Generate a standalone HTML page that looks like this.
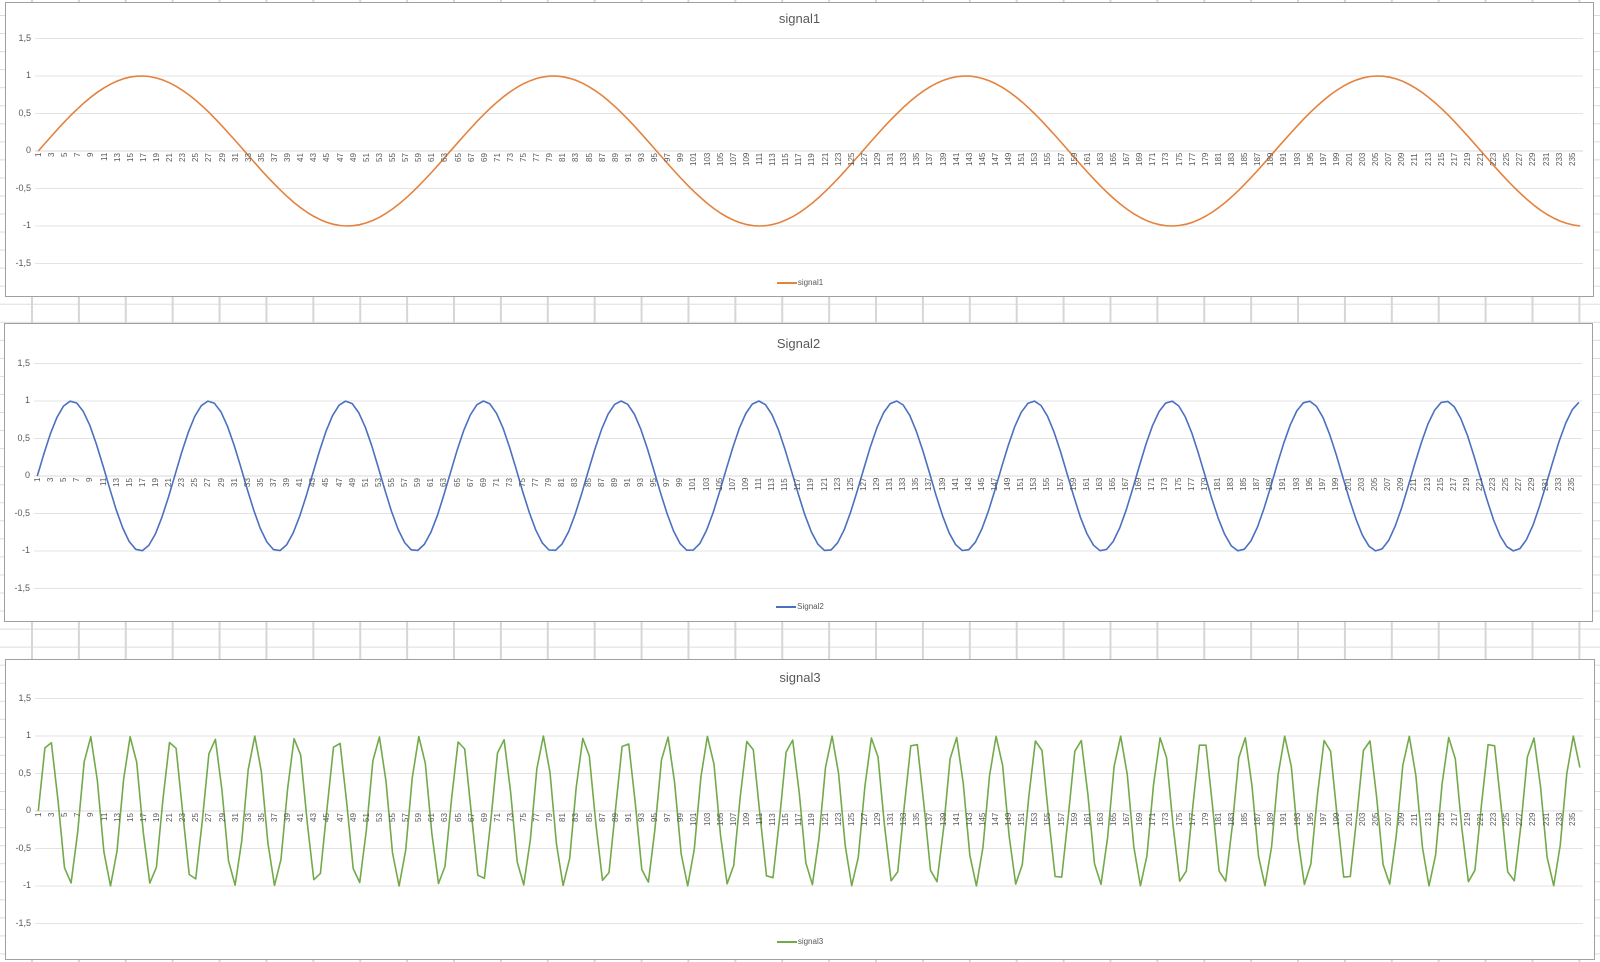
<!DOCTYPE html>
<html><head><meta charset="utf-8"><style>
html,body{margin:0;padding:0;}
body{width:1600px;height:962px;position:relative;overflow:hidden;background-color:#fff;
background-image:linear-gradient(to right,#d6d6d6 0,#d6d6d6 2px,transparent 2px),linear-gradient(to bottom,#dcdcdc 0,#dcdcdc 1px,transparent 1px);
background-size:46.9px 100%,100% 18.05px;background-position:31px 0,0 15px;font-family:"Liberation Sans",sans-serif;}
.chart{position:absolute;background:#fff;border:1px solid #a0a0a0;box-sizing:border-box;}
.title{position:absolute;left:0;right:0;text-align:center;font-size:13px;color:#595959;}
.yl{position:absolute;left:0;width:25px;text-align:right;font-size:9px;color:#595959;}
.lab{position:absolute;display:flex;left:26px;}
.lab span{display:block;width:13.12px;height:20px;writing-mode:vertical-rl;transform:rotate(180deg);text-align:end;font-size:8px;line-height:13.12px;color:#595959;}
.leg{position:absolute;left:0;right:0;text-align:center;font-size:8px;color:#595959;}
.leg i{display:inline-block;width:20px;height:2px;vertical-align:middle;margin-right:1px;}
svg{position:absolute;left:0;top:0;}
</style></head><body>

<div class="chart" id="c1" style="left:5px;top:2px;width:1589px;height:295px;">
<div class="title" style="top:8px;">signal1</div>
</div>
<div class="chart" id="c2" style="left:4px;top:323px;width:1589px;height:299px;">
<div class="title" style="top:12px;">Signal2</div>
</div>
<div class="chart" id="c3" style="left:5px;top:659px;width:1590px;height:301px;">
<div class="title" style="top:10px;">signal3</div>
</div>

<div id="labtpl" style="display:none"><span>1</span><span>3</span><span>5</span><span>7</span><span>9</span><span>11</span><span>13</span><span>15</span><span>17</span><span>19</span><span>21</span><span>23</span><span>25</span><span>27</span><span>29</span><span>31</span><span>33</span><span>35</span><span>37</span><span>39</span><span>41</span><span>43</span><span>45</span><span>47</span><span>49</span><span>51</span><span>53</span><span>55</span><span>57</span><span>59</span><span>61</span><span>63</span><span>65</span><span>67</span><span>69</span><span>71</span><span>73</span><span>75</span><span>77</span><span>79</span><span>81</span><span>83</span><span>85</span><span>87</span><span>89</span><span>91</span><span>93</span><span>95</span><span>97</span><span>99</span><span>101</span><span>103</span><span>105</span><span>107</span><span>109</span><span>111</span><span>113</span><span>115</span><span>117</span><span>119</span><span>121</span><span>123</span><span>125</span><span>127</span><span>129</span><span>131</span><span>133</span><span>135</span><span>137</span><span>139</span><span>141</span><span>143</span><span>145</span><span>147</span><span>149</span><span>151</span><span>153</span><span>155</span><span>157</span><span>159</span><span>161</span><span>163</span><span>165</span><span>167</span><span>169</span><span>171</span><span>173</span><span>175</span><span>177</span><span>179</span><span>181</span><span>183</span><span>185</span><span>187</span><span>189</span><span>191</span><span>193</span><span>195</span><span>197</span><span>199</span><span>201</span><span>203</span><span>205</span><span>207</span><span>209</span><span>211</span><span>213</span><span>215</span><span>217</span><span>219</span><span>221</span><span>223</span><span>225</span><span>227</span><span>229</span><span>231</span><span>233</span><span>235</span></div>

<div class="leg" id="l1" style="top:278px;"><i style="background:#E4823E"></i>signal1</div>
<div class="leg" id="l2" style="top:602px;"><i style="background:#4A70C0"></i>Signal2</div>
<div class="leg" id="l3" style="top:937px;"><i style="background:#72AA4A"></i>signal3</div>

<script>
var cfg=[
 {id:'c1',z:148,col:'#E4823E',f:function(k){return Math.sin(k*0.1);}},
 {id:'c2',z:152,col:'#4A70C0',f:function(k){return Math.sin(k*0.3);}},
 {id:'c3',z:151,col:'#72AA4A',f:function(k){return Math.sin(k);}}
];
var tpl=document.getElementById('labtpl').innerHTML;
var ylab=['1,5','1','0,5','0','-0,5','-1','-1,5'];
cfg.forEach(function(c,ci){
 var el=document.getElementById(c.id);
 var svg='<svg width="1590" height="302">';
 for(var j=0;j<7;j++){var y=c.z-112.5+j*37.5;
  svg+='<line x1="29" x2="1577" y1="'+y+'" y2="'+y+'" stroke="'+(j==3?'#d9d9d9':'#e3e3e3')+'" stroke-width="1"/>';}
 var pts=[];
 for(var i=0;i<236;i++){pts.push((32.3+i*6.56).toFixed(1)+','+(c.z-75*c.f(i)).toFixed(1));}
 svg+='<polyline points="'+pts.join(' ')+'" fill="none" stroke="'+c.col+'" stroke-width="1.6" stroke-linejoin="round"/></svg>';
 el.insertAdjacentHTML('beforeend',svg);
 for(var j=0;j<7;j++){el.insertAdjacentHTML('beforeend','<div class="yl" style="top:'+(c.z-112.5+j*37.5-6)+'px">'+ylab[j]+'</div>');}
 el.insertAdjacentHTML('beforeend','<div class="lab" style="top:'+(c.z+2)+'px">'+tpl+'</div>');
});
</script>
</body></html>
